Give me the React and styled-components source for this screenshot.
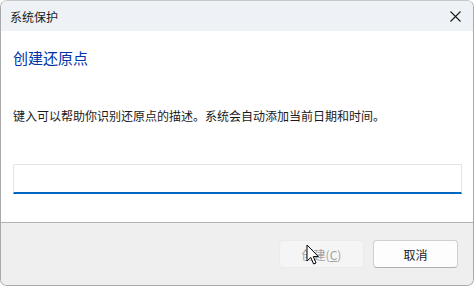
import React from 'react'
import styled, { createGlobalStyle } from 'styled-components'

const Global = createGlobalStyle`
  html, body { margin: 0; padding: 0; background: #ffffff; }
  body { font-family: "Noto Sans CJK SC", "Microsoft YaHei", sans-serif; }
`

const Window = styled.div`
  position: relative;
  width: 474px;
  height: 286px;
  box-sizing: border-box;
  border: 1px solid #a9a9a9;
  border-top-color: #c8c8c8;
  border-radius: 7px;
  overflow: hidden;
  display: flex;
  flex-direction: column;
  background: #ffffff;
`

const TitleBar = styled.div`
  height: 30px;
  flex: none;
  display: flex;
  align-items: center;
  justify-content: space-between;
  padding: 0 10px 0 9px;
  background: #eef2f6;
  font-size: 12px;
  color: #1a1a1a;
`

const Close = styled.div`
  width: 16px;
  height: 16px;
  display: flex;
  align-items: center;
  justify-content: center;
`

const Body = styled.div`
  flex: 1;
  padding: 17px 12px 0 12px;
  display: flex;
  flex-direction: column;
`

const Heading = styled.div`
  font-size: 15px;
  line-height: 20px;
  color: #0033a8;
`

const Desc = styled.div`
  margin-top: 39px;
  font-size: 12px;
  line-height: 18px;
  color: #1a1a1a;
`

const Input = styled.input`
  margin-top: 39px;
  height: 30px;
  box-sizing: border-box;
  width: 449px;
  border: 1px solid #e3e3e3;
  border-bottom: 2px solid #0067c0;
  border-radius: 2px 2px 0 0;
  outline: none;
  background: #ffffff;
`

const Footer = styled.div`
  height: 63px;
  flex: none;
  box-sizing: border-box;
  border-top: 1px solid #b4b4b4;
  background: #efefef;
  display: flex;
  justify-content: flex-end;
  align-items: flex-start;
  gap: 9px;
  padding: 17px 15px 0 0;
`

const Button = styled.button`
  width: 85px;
  height: 28px;
  box-sizing: border-box;
  border-radius: 4px;
  font-family: inherit;
  font-size: 12px;
  border: 1px solid ${p => (p.disabled ? '#ebebeb' : '#d0d0d0')};
  border-bottom-color: ${p => (p.disabled ? '#ebebeb' : '#b0b0b0')};
  background: ${p => (p.disabled ? '#f5f5f5' : '#fdfdfd')};
  color: ${p => (p.disabled ? '#a2a2a2' : '#1a1a1a')};
  padding: 0;
`

const Cursor = styled.svg`
  position: absolute;
  left: 305px;
  top: 243px;
`

export default function App() {
  return (
    <>
      <Global />
      <Window>
        <TitleBar>
          <span>系统保护</span>
          <Close>
            <svg width="11" height="11" viewBox="0 0 11 11">
              <path d="M0.5 0.5 L10.5 10.5 M10.5 0.5 L0.5 10.5" stroke="#1a1a1a" strokeWidth="1.1" />
            </svg>
          </Close>
        </TitleBar>
        <Body>
          <Heading>创建还原点</Heading>
          <Desc>键入可以帮助你识别还原点的描述。系统会自动添加当前日期和时间。</Desc>
          <Input />
        </Body>
        <Footer>
          <Button disabled>创建(<u>C</u>)</Button>
          <Button>取消</Button>
        </Footer>
        <Cursor width="14" height="22" viewBox="0 0 14 22">
          <path d="M1 1 L1 17 L4.8 13.4 L7.6 20 L10 19 L7.3 12.6 L12.4 12.6 Z" fill="#ffffff" stroke="#000000" strokeWidth="1" strokeLinejoin="round" />
        </Cursor>
      </Window>
    </>
  )
}
